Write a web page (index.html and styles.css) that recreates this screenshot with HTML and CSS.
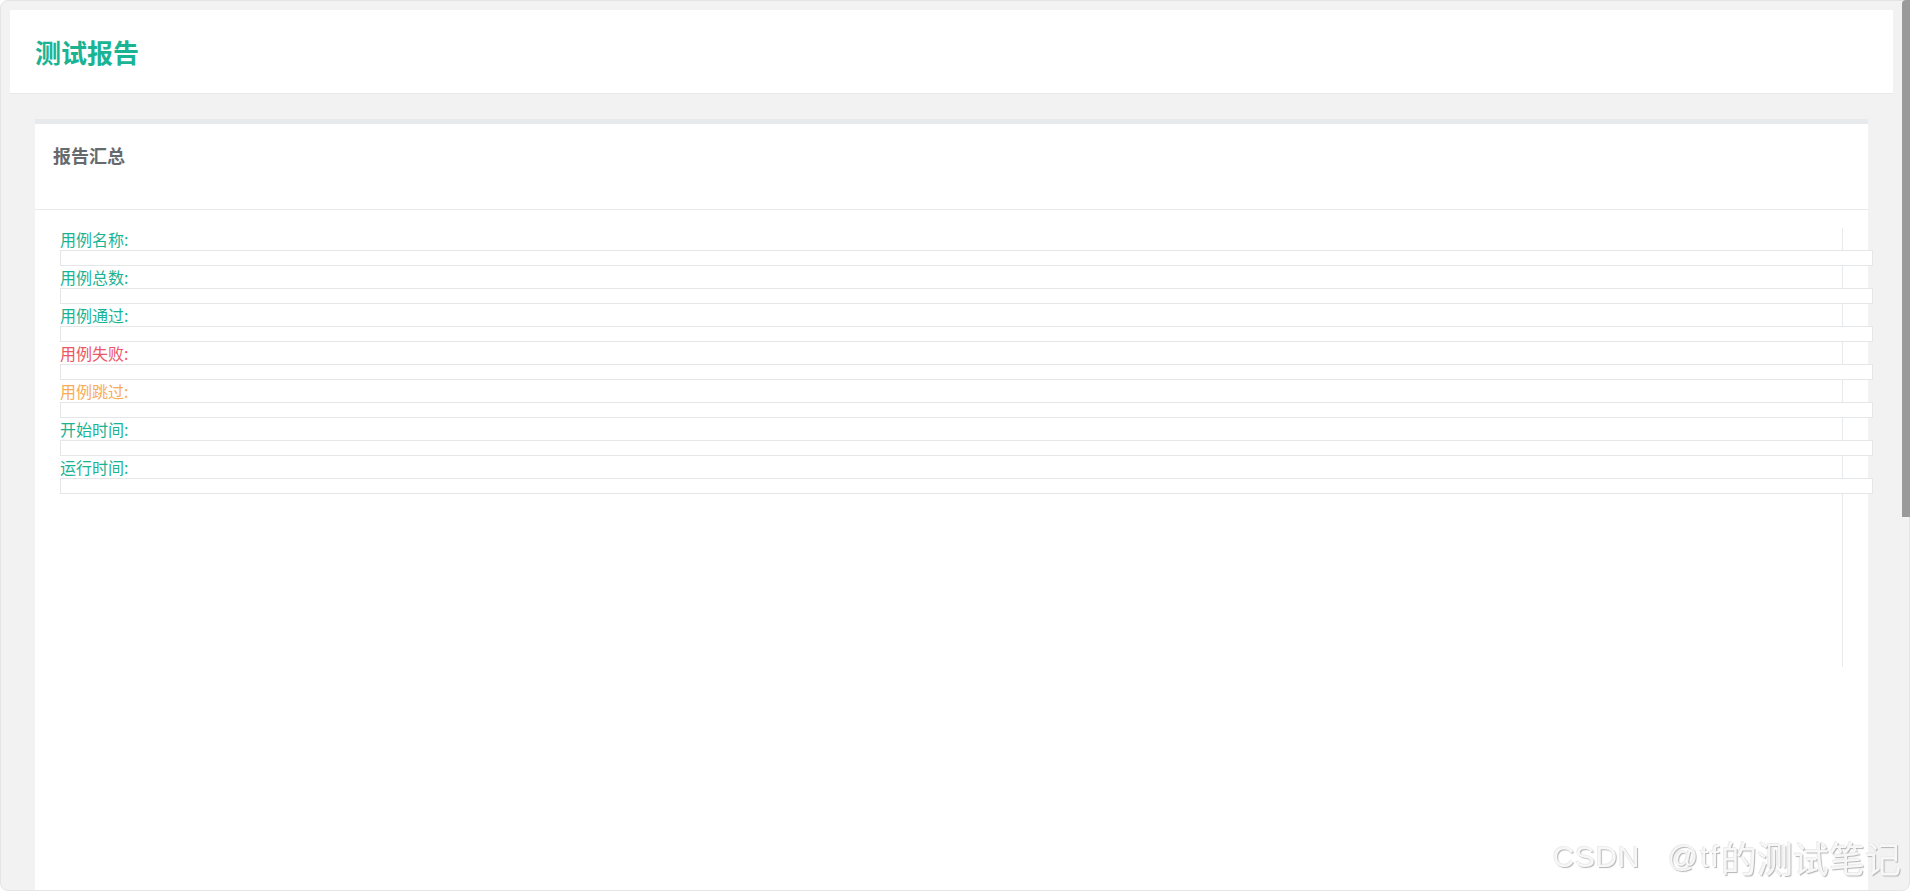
FILE: index.html
```html
<!DOCTYPE html>
<html lang="zh-CN">
<head>
<meta charset="utf-8">
<title>测试报告</title>
<link rel="stylesheet" href="styles.css">
</head>
<body>
<div class="window">
  <header class="page-header">
    <h1 class="page-title">测试报告</h1>
  </header>
  <section class="panel">
    <div class="panel-title">
      <h2>报告汇总</h2>
    </div>
    <div class="panel-content">
      <div class="summary">
        <label class="field-label ok">用例名称:</label>
        <input class="field-input" type="text">
        <label class="field-label ok">用例总数:</label>
        <input class="field-input" type="text">
        <label class="field-label ok">用例通过:</label>
        <input class="field-input" type="text">
        <label class="field-label fail">用例失败:</label>
        <input class="field-input" type="text">
        <label class="field-label skip">用例跳过:</label>
        <input class="field-input" type="text">
        <label class="field-label ok">开始时间:</label>
        <input class="field-input" type="text">
        <label class="field-label ok">运行时间:</label>
        <input class="field-input" type="text">
      </div>
    </div>
  </section>
</div>
<div class="scroll-thumb"></div>
<div class="watermark"><span class="wm-site">CSDN</span><span class="wm-user">@tf</span><span class="wm-name">的测试笔记</span></div>
</body>
</html>
```

FILE: styles.css
```css
html, body {
  margin: 0;
  padding: 0;
  background: #ffffff;
  overflow: hidden;
}

body {
  font-family: "Noto Sans CJK SC", "Noto Sans", sans-serif;
}

.window {
  box-sizing: border-box;
  height: 891px;
  border: 1px solid #e4e4e4;
  border-radius: 8px;
  background: #f2f2f2;
  padding: 9px 16px 0 9px;
  overflow: hidden;
}

.page-header {
  height: 83px;
  background: #ffffff;
  border-bottom: 1px solid #e7eaec;
  display: flex;
  align-items: center;
  padding-left: 25px;
}

.page-title {
  margin: 0;
  font-size: 26px;
  line-height: 30px;
  font-weight: 700;
  color: #1ab394;
}

.panel {
  margin: 25px 25px 0 25px;
  background: #ffffff;
  border-top: 5px solid #e7eaec;
  height: 900px;
}

.panel-title {
  height: 86px;
  box-sizing: border-box;
  padding: 20px 18px 0 18px;
  border-bottom: 1px solid #e7eaec;
}

.panel-title h2 {
  margin: 0;
  font-size: 18px;
  line-height: 22px;
  font-weight: 700;
  color: #676a6c;
}

.panel-content {
  padding: 18px 25px 0 25px;
}

.summary {
  height: 439px;
  border-right: 1px solid #e7eaec;
  display: flex;
  flex-direction: column;
}

.field-label {
  display: block;
  font-size: 16px;
  line-height: 22px;
  height: 22px;
}

.field-label.ok { color: #1ab394; }
.field-label.fail { color: #ed5565; }
.field-label.skip { color: #f8ac59; }

.field-input {
  display: block;
  box-sizing: border-box;
  height: 16px;
  width: calc(100% + 31px);
  margin: 0;
  padding: 0;
  border: 1px solid #e5e6e7;
  background: #ffffff;
  outline: none;
  flex: none;
}

.scroll-thumb {
  position: fixed;
  top: 0;
  right: 0;
  width: 8px;
  height: 517px;
  background: #9a9a9a;
  border-top-left-radius: 4px;
}

.watermark {
  position: fixed;
  right: 9px;
  bottom: 14px;
  font-family: "Liberation Sans", "Noto Sans CJK SC", sans-serif;
  font-size: 30px;
  line-height: 40px;
  color: #f7f7f7;
  text-shadow: 1px 1px 1px #b4b4b4, -1px -1px 0 #ececec;
  white-space: nowrap;
}

.wm-site {
  letter-spacing: 0.5px;
}

.wm-user {
  margin-left: 28px;
  letter-spacing: 2px;
}

.wm-name {
  font-family: "Noto Sans CJK SC", sans-serif;
  font-size: 36px;
  vertical-align: -6px;
}
```
